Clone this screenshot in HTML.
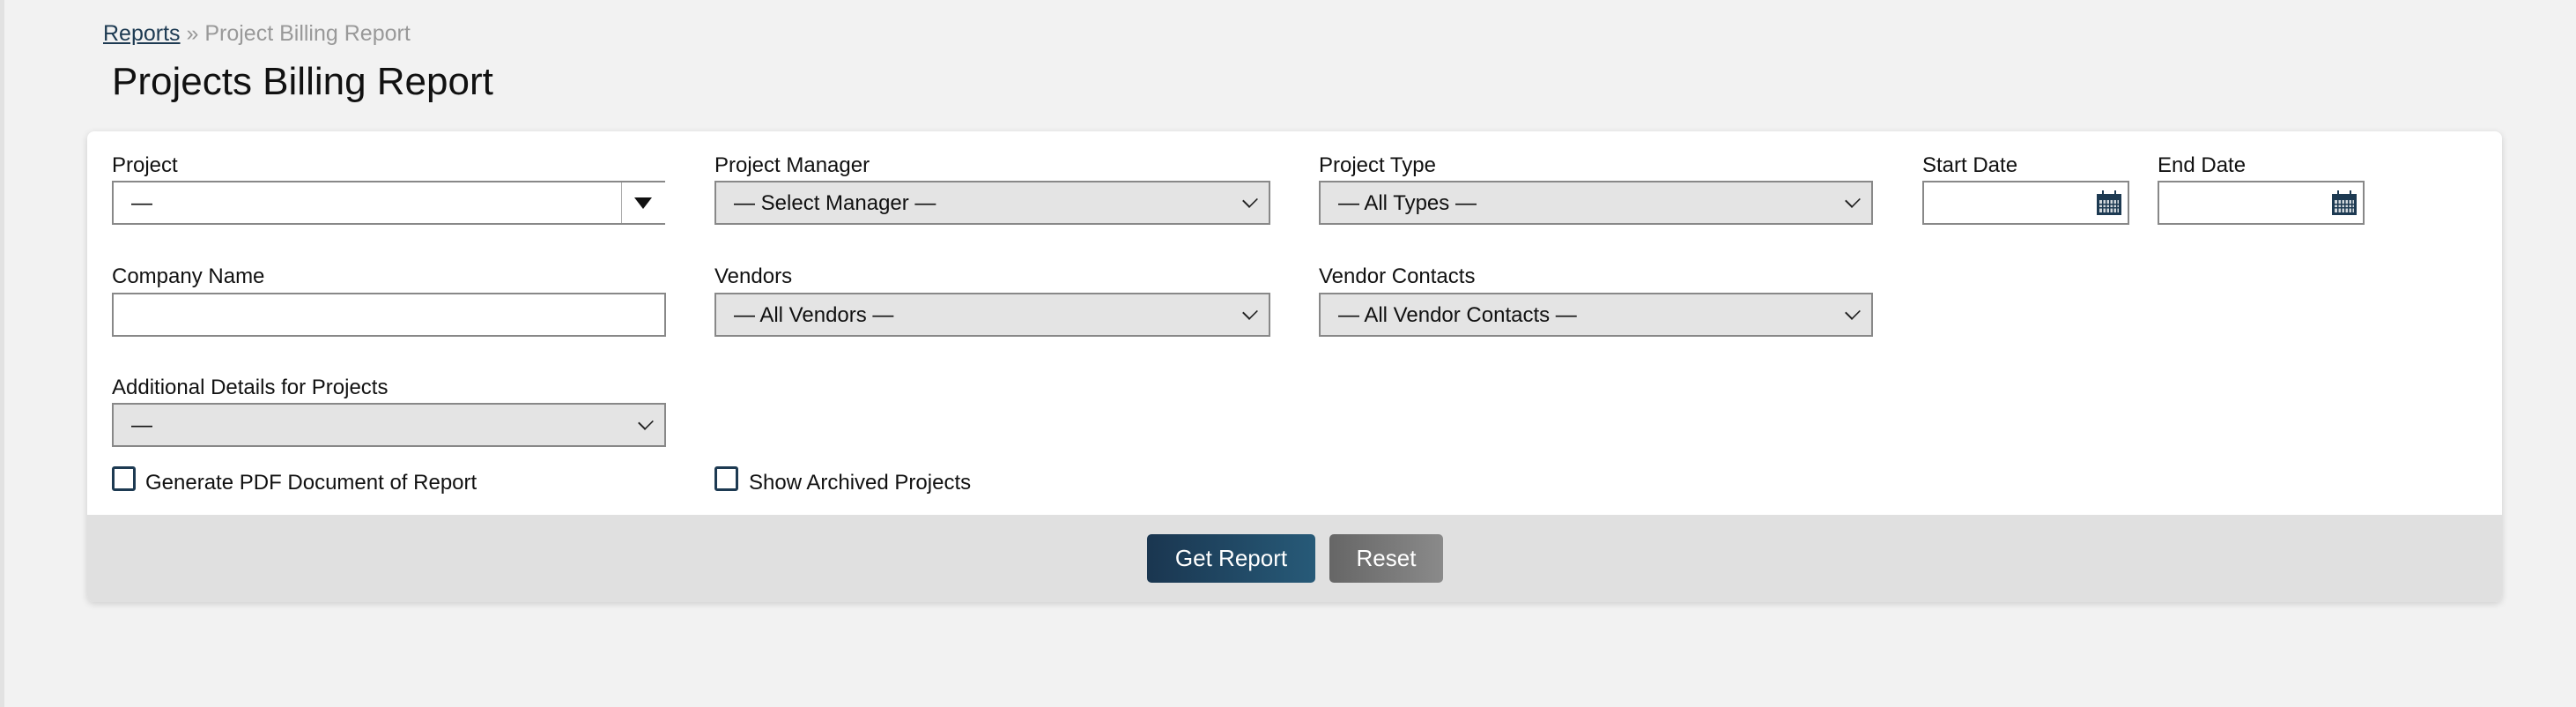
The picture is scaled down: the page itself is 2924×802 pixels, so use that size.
<!DOCTYPE html>
<html><head><meta charset="utf-8"><style>
*{box-sizing:border-box;margin:0;padding:0}
body{width:2924px;height:802px;background:#f2f2f2;font-family:"Liberation Sans",sans-serif;position:relative;overflow:hidden;color:#111}
.edge{position:absolute;left:0;top:0;width:5px;height:802px;background:#e2e2e2}
.bc{position:absolute;left:117px;top:24px;font-size:25px;color:#999}
.bc a{color:#1d3a52;text-decoration:underline}
h1{position:absolute;left:127px;top:68px;font-size:44px;font-weight:normal;color:#111}
.card{position:absolute;left:99px;top:149px;width:2741px;height:534px;background:#fff;border-radius:8px;box-shadow:0 2px 8px rgba(0,0,0,.15);overflow:hidden}
.foot{position:absolute;left:0;top:435px;width:100%;height:99px;background:#e0e0e0}
.l{position:absolute;font-size:24px;color:#111;margin-top:3px}
.f{position:absolute;height:50px;border:2px solid #888;background:#fff;font-size:24px;line-height:48px;padding-left:20px}
.s{background:#e4e4e4}
.chev{position:absolute;right:14px;top:13px;width:14px;height:14px;border-right:2px solid #222;border-bottom:2px solid #222;transform:rotate(45deg) scaleX(.8)}
.cb{position:absolute;width:27px;height:28px;border:3px solid #1d3a52;border-radius:3px}
.btn{position:absolute;top:457px;height:55px;border-radius:5px;color:#fff;font-size:26px;line-height:55px;text-align:center}
</style></head><body>
<div class="edge"></div>
<div class="bc"><a>Reports</a> » Project Billing Report</div>
<h1>Projects Billing Report</h1>
<div class="card">
<div class="l" style="left:28px;top:22px">Project</div>
<div class="f" style="left:28px;top:56px;width:628px;border-right:none">—<div style="position:absolute;right:0;top:0;width:50px;height:46px;border-left:1px solid #aaa;background:#fff"><div style="position:absolute;left:14px;top:17px;border-left:10px solid transparent;border-right:10px solid transparent;border-top:13px solid #111"></div></div></div>
<div class="l" style="left:712px;top:22px">Project Manager</div>
<div class="f s" style="left:712px;top:56px;width:631px">— Select Manager —<div class="chev"></div></div>
<div class="l" style="left:1398px;top:22px">Project Type</div>
<div class="f s" style="left:1398px;top:56px;width:629px">— All Types —<div class="chev"></div></div>
<div class="l" style="left:2083px;top:22px">Start Date</div>
<div class="f" style="left:2083px;top:56px;width:235px"><svg style="position:absolute;right:6px;top:8px" width="30" height="30" viewBox="0 0 30 30"><rect x="1" y="5" width="28" height="24" fill="#1d3a52"/><rect x="7" y="1" width="2" height="7" fill="#1d3a52"/><rect x="21" y="1" width="2" height="7" fill="#1d3a52"/><g fill="#fff"><rect x="4" y="12" width="22" height="14" opacity=".8"/></g><g fill="#1d3a52"><rect x="7" y="12" width="1.5" height="14"/><rect x="11" y="12" width="1.5" height="14"/><rect x="15" y="12" width="1.5" height="14"/><rect x="19" y="12" width="1.5" height="14"/><rect x="23" y="12" width="1.5" height="14"/><rect x="4" y="16" width="22" height="1.5"/><rect x="4" y="20" width="22" height="1.5"/></g></svg></div>
<div class="l" style="left:2350px;top:22px">End Date</div>
<div class="f" style="left:2350px;top:56px;width:235px"><svg style="position:absolute;right:6px;top:8px" width="30" height="30" viewBox="0 0 30 30"><rect x="1" y="5" width="28" height="24" fill="#1d3a52"/><rect x="7" y="1" width="2" height="7" fill="#1d3a52"/><rect x="21" y="1" width="2" height="7" fill="#1d3a52"/><g fill="#fff"><rect x="4" y="12" width="22" height="14" opacity=".8"/></g><g fill="#1d3a52"><rect x="7" y="12" width="1.5" height="14"/><rect x="11" y="12" width="1.5" height="14"/><rect x="15" y="12" width="1.5" height="14"/><rect x="19" y="12" width="1.5" height="14"/><rect x="23" y="12" width="1.5" height="14"/><rect x="4" y="16" width="22" height="1.5"/><rect x="4" y="20" width="22" height="1.5"/></g></svg></div>

<div class="l" style="left:28px;top:148px">Company Name</div>
<div class="f" style="left:28px;top:183px;width:629px"></div>
<div class="l" style="left:712px;top:148px">Vendors</div>
<div class="f s" style="left:712px;top:183px;width:631px">— All Vendors —<div class="chev"></div></div>
<div class="l" style="left:1398px;top:148px">Vendor Contacts</div>
<div class="f s" style="left:1398px;top:183px;width:629px">— All Vendor Contacts —<div class="chev"></div></div>

<div class="l" style="left:28px;top:274px">Additional Details for Projects</div>
<div class="f s" style="left:28px;top:308px;width:629px">—<div class="chev"></div></div>

<div class="cb" style="left:28px;top:380px"></div>
<div class="l" style="left:66px;top:382px">Generate PDF Document of Report</div>
<div class="cb" style="left:712px;top:380px"></div>
<div class="l" style="left:751px;top:382px">Show Archived Projects</div>

<div class="foot"></div>
<div class="btn" style="left:1203px;width:191px;background:linear-gradient(90deg,#1a3650,#275a78)">Get Report</div>
<div class="btn" style="left:1410px;width:129px;background:linear-gradient(90deg,#666,#8a8a8a)">Reset</div>
</div>
</body></html>
